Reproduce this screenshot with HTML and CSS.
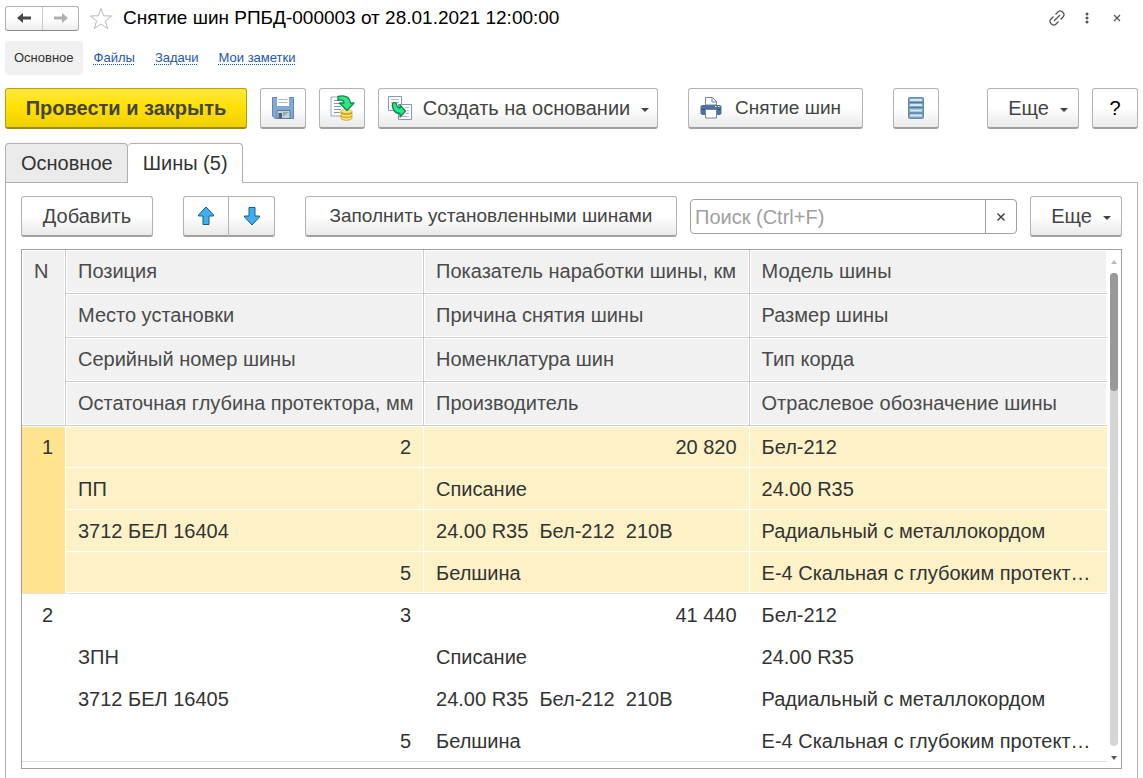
FILE: index.html
```html
<!DOCTYPE html>
<html lang="ru">
<head>
<meta charset="utf-8">
<meta name="viewport" content="width=device-width, initial-scale=1">
<title>Снятие шин РПБД-000003</title>
<link rel="stylesheet" href="styles.css">
</head>
<body>
<div class="window">
  <header class="titlebar">
    <div class="history">
      <button type="button" aria-label="Назад"><svg width="14" height="12" viewBox="0 0 14 12"><path d="M0 6l6-5v3.500h8v3H6V11z" fill="#484848"/></svg></button>
      <button type="button" aria-label="Вперед"><svg width="14" height="12" viewBox="0 0 14 12"><path d="M14 6L8 1v3.500H0v3h8V11z" fill="#b0b0b0"/></svg></button>
    </div>
    <button type="button" class="plain" aria-label="В избранное"><svg width="24" height="23" viewBox="0 0 24 23"><path d="M12 1.500l2.700 7.300 8 .2-6.300 4.900 2.300 7.600L12 17l-6.700 4.500 2.300-7.600L1.300 9l8-.2z" fill="#fff" stroke="#b3bac2"/></svg></button>
    <h1>Снятие шин РПБД-000003 от 28.01.2021 12:00:00</h1>
    <div class="window-tools">
      <button type="button" class="plain" aria-label="Получить ссылку"><svg width="16" height="16" viewBox="0 0 16 16" fill="none" stroke="#555" stroke-width="1.300"><path d="M5 11l6-6M6.500 4.500l2.700-2.700a2.800 2.800 0 0 1 4 0l1 1a2.800 2.800 0 0 1 0 4L11.500 9.500M4.500 6.500L1.800 9.200a2.800 2.800 0 0 0 0 4l1 1a2.800 2.800 0 0 0 4 0L9.500 11.500"/></svg></button>
      <button type="button" class="plain" aria-label="Меню"><svg width="4" height="12" viewBox="0 0 4 12" fill="#555"><circle cx="2" cy="2" r="1.500"/><circle cx="2" cy="6" r="1.500"/><circle cx="2" cy="10" r="1.500"/></svg></button>
      <button type="button" class="plain" aria-label="Закрыть"><svg width="8" height="8" viewBox="0 0 8 8"><path d="M1 1l6 6M7 1L1 7" stroke="#555" stroke-width="1.200"/></svg></button>
    </div>
  </header>

  <nav class="sections">
    <a class="current" href="#main">Основное</a>
    <a href="#files">Файлы</a>
    <a href="#tasks">Задачи</a>
    <a href="#notes">Мои заметки</a>
  </nav>

  <div class="toolbar">
    <button type="button" class="btn primary">Провести и закрыть</button>
    <button type="button" class="btn square" aria-label="Записать"><svg width="24" height="24" viewBox="0 0 24 24"><path d="M1.500 1.500h21v21H4l-2.500-2.500z" fill="#81a9d6" stroke="#5e88b3"/><path d="M6 1h12v9H6z" fill="#fff"/><path d="M7.500 3.500h9M7.500 6.500h9" stroke="#9ebbd5"/><path d="M6 14.500h13v8H6z" fill="#c9d3d7" stroke="#5e7b92"/><path d="M7.500 17h3.500v5H7.500z" fill="#416386"/><path d="M12 16h6l-6 5z" fill="#9caab2"/></svg></button>
    <button type="button" class="btn square" aria-label="Провести"><svg width="26" height="26" viewBox="0 0 26 26"><path d="M2 2h17v19H2z" fill="#fff" stroke="#91a6ba"/><path d="M5 5.500h6M5 8.500h6M5 11.500h7M5 14.500h7M5 17.500h6" stroke="#8197ad"/><path d="M12 17v6c0 3 11 3 11 0v-6z" fill="#e0aa25" stroke="#c29528" stroke-width=".7"/><path d="M12.500 19.500c1 2 9 2 10 0M12.500 22.500c1 2 9 2 10 0" fill="none" stroke="#fff08c" stroke-width="1.300"/><ellipse cx="17.500" cy="16.500" rx="5.500" ry="2" fill="#ffe77a" stroke="#c29528" stroke-width=".7"/><path d="M9 1.500c6-1.500 11.500 0 12.500 6.500H25L18 15.500 10.500 8h4.500c0-2.500-2.500-3.500-6-3z" fill="#2be887" stroke="#118747" stroke-width="1.300" stroke-linejoin="round"/></svg></button>
    <button type="button" class="btn create"><svg width="26" height="26" viewBox="0 0 26 26"><path d="M1.500 1.500h13v14h-13z" fill="#fff" stroke="#8299b1"/><path d="M4 4.500h8M4 7.500h8M4 10.500h3" stroke="#a8b8c8"/><path d="M11.500 9.500h13v15h-13z" fill="#fff" stroke="#8299b1"/><path d="M18 12.500h4M20 15.500h2M19 18.500h3M14 21.500h8" stroke="#a8b8c8"/><path d="M5.500 8.500c1.500-1 3-1 4 0 0 3 1 4.500 3.500 4.500v-3l5.500 6-5.500 6v-3.500c-5 0-8-4-7.500-10z" fill="#2be887" stroke="#118747" stroke-width="1.300" stroke-linejoin="round"/></svg><span>Создать на основании</span><i class="caret"></i></button>
    <button type="button" class="btn print"><svg width="22" height="22" viewBox="0 0 22 22"><path d="M5.500 8V.500h7l4 4V8z" fill="#fff" stroke="#71869d"/><path d="M12 .500V5h4.500" fill="none" stroke="#71869d"/><path d="M2 8h18l1.500 1.500v7L20 18H2L.500 16.500v-7z" fill="#4c739e"/><path d="M1 12.500h20" stroke="#315779"/><path d="M5.500 12.500h11v8.500h-11z" fill="#fff" stroke="#71869d"/><path d="M15 9.500h1.500M18 9.500h1.500" stroke="#fff"/></svg><span>Снятие шин</span></button>
    <button type="button" class="btn square list" aria-label="Список"><svg width="16" height="22" viewBox="0 0 16 22"><rect x=".5" y=".5" width="15" height="21" rx="1" fill="#7ea5c4" stroke="#5f89a9"/><path d="M2 3h12M2 8h12M2 13.500h12M2 18.500h12" stroke="#d5e7f3" stroke-width="2"/><path d="M1 5.500h14M1 10.500h14M1 16h14" stroke="#4f7da1"/></svg></button>
    <button type="button" class="btn more end">Еще<i class="caret"></i></button>
    <button type="button" class="btn square help" aria-label="Справка">?</button>
  </div>

  <div class="tabs" role="tablist">
    <button type="button" role="tab" aria-selected="false">Основное</button>
    <button type="button" role="tab" aria-selected="true">Шины (5)</button>
  </div>

  <main class="panel">
    <div class="commands">
      <button type="button" class="btn add">Добавить</button>
      <div class="pair">
        <button type="button" class="btn" aria-label="Переместить вверх"><svg width="18" height="20" viewBox="0 0 18 20"><path d="M9 1l7.500 8v1H12v8.500H6V10H1.500V9z" fill="#43aeee" stroke="#10608f" stroke-linejoin="round"/></svg></button>
        <button type="button" class="btn" aria-label="Переместить вниз"><svg width="18" height="20" viewBox="0 0 18 20"><path d="M9 19l7.500-8v-1H12V1.500H6V10H1.500v1z" fill="#43aeee" stroke="#10608f" stroke-linejoin="round"/></svg></button>
      </div>
      <button type="button" class="btn fill">Заполнить установленными шинами</button>
      <div class="search">
        <input type="text" aria-label="Поиск" placeholder="Поиск (Ctrl+F)">
        <button type="button" aria-label="Очистить"><svg width="10" height="10" viewBox="0 0 10 10"><path d="M1.500 1.500l7 7M8.500 1.500l-7 7" stroke="#444" stroke-width="1.500"/></svg></button>
      </div>
      <button type="button" class="btn more">Еще<i class="caret"></i></button>
    </div>

    <div class="grid">
      <table>
        <colgroup><col class="c-num"><col class="c-pos"><col class="c-run"><col></colgroup>
        <thead>
          <tr><th rowspan="4" class="num">N</th><th>Позиция</th><th>Показатель наработки шины, км</th><th>Модель шины</th></tr>
          <tr><th>Место установки</th><th>Причина снятия шины</th><th>Размер шины</th></tr>
          <tr><th>Серийный номер шины</th><th>Номенклатура шин</th><th>Тип корда</th></tr>
          <tr><th>Остаточная глубина протектора, мм</th><th>Производитель</th><th>Отраслевое обозначение шины</th></tr>
        </thead>
        <tbody class="selected">
          <tr><td rowspan="4" class="num">1</td><td class="right">2</td><td class="right">20 820</td><td>Бел-212</td></tr>
          <tr><td>ПП</td><td>Списание</td><td>24.00 R35</td></tr>
          <tr><td>3712 БЕЛ 16404</td><td class="goods">24.00 R35  Бел-212  210В</td><td>Радиальный с металлокордом</td></tr>
          <tr><td class="right">5</td><td>Белшина</td><td>Е-4 Скальная с глубоким протект…</td></tr>
        </tbody>
        <tbody>
          <tr><td rowspan="4" class="num">2</td><td class="right">3</td><td class="right">41 440</td><td>Бел-212</td></tr>
          <tr><td>ЗПН</td><td>Списание</td><td>24.00 R35</td></tr>
          <tr><td>3712 БЕЛ 16405</td><td class="goods">24.00 R35  Бел-212  210В</td><td>Радиальный с металлокордом</td></tr>
          <tr><td class="right">5</td><td>Белшина</td><td>Е-4 Скальная с глубоким протект…</td></tr>
        </tbody>
      </table>
      <div class="scroll">
        <i class="up"></i>
        <div class="track"><div class="thumb"></div></div>
        <i class="down"></i>
      </div>
    </div>
  </main>
</div>
</body>
</html>
```
FILE: styles.css
```css
* { box-sizing: border-box; }

body {
  margin: 0;
  background: #fff;
  color: #333;
  font-family: "Liberation Sans", Arial, sans-serif;
  font-size: 20px;
  line-height: 24px;
}

button, input { font: inherit; color: inherit; margin: 0; padding: 0; }
svg { display: block; flex: none; }

.window {
  display: flex;
  flex-direction: column;
  min-height: 100vh;
  padding: 0 5px;
}

.titlebar { display: flex; align-items: center; height: 36px; margin-bottom: 5px; }

.history {
  display: flex;
  border: 1px solid #b0b0b0;
  border-bottom-color: #8c8c8c;
  border-radius: 3px;
  background: linear-gradient(#fff 50%, #ececec);
}
.history button {
  display: grid;
  place-items: center;
  width: 36px;
  height: 23px;
  border: 0;
  background: none;
}
.history button + button { border-left: 1px solid #ccc; }

.plain { border: 0; background: none; }
.titlebar > .plain { margin-left: 10px; }

h1 {
  margin: 0 0 0 10px;
  color: #000;
  font-size: 19px;
  font-weight: 400;
}

.window-tools { display: flex; align-items: center; gap: 14px; margin-left: auto; padding-right: 13px; }
.window-tools .plain { display: grid; place-items: center; width: 16px; height: 16px; }

.sections {
  display: flex;
  align-items: center;
  gap: 20px;
  margin-bottom: 13px;
  font-size: 13px;
  line-height: 16px;
}
.sections a { color: #1c55ae; text-decoration: underline dotted 1px; text-underline-offset: 2px; }
.sections .current {
  margin-right: -9px;
  padding: 9px 9px;
  border-radius: 4px;
  background: #f0f0f0;
  color: #333;
  text-decoration: none;
}

.toolbar { display: flex; gap: 13px; margin-bottom: 14px; }

.btn {
  display: flex;
  align-items: center;
  justify-content: center;
  height: 41px;
  border: 1px solid #b3b3b3;
  border-bottom: 2px solid #a0a0a0;
  border-radius: 3px;
  background: linear-gradient(#fff 50%, #e9e9e9);
  color: #444;
  white-space: nowrap;
}
.primary {
  width: 242px;
  border-color: #b59f0c;
  border-bottom-color: #9c8a14;
  background: linear-gradient(#ffe93f, #ffe000 50%, #f0d000);
  font-weight: 700;
}
.square { width: 46px; }
.create { width: 280px; }
.create span { margin-left: 10px; }
.print { justify-content: flex-start; width: 175px; margin-left: 17px; padding-left: 11px; font-size: 19px; }
.print span { margin-left: 13px; }
.list { margin-left: 17px; }
.more { width: 92px; padding-left: 10px; }
.end { margin-left: auto; }
.help { color: #000; }

.caret {
  margin: 4px 0 0 11px;
  border: 4px solid transparent;
  border-top-color: #444;
  border-bottom: 0;
}

.tabs { display: flex; }
.tabs button {
  height: 39px;
  padding: 0 14px 0 15px;
  border: 1px solid #b0b0b0;
  border-bottom: 0;
  border-radius: 4px 4px 0 0;
  background: #ebebeb;
}
.tabs button + button { border-left: 0; }
.tabs [aria-selected="true"] {
  position: relative;
  height: 40px;
  margin-bottom: -1px;
  padding-bottom: 1px;
  background: #fff;
}

.panel {
  display: flex;
  flex: 1;
  flex-direction: column;
  padding: 13px 15px 9px;
  border: 1px solid #b0b0b0;
  border-bottom: 0;
}

.commands { display: flex; align-items: center; margin-bottom: 12px; }
.add { width: 132px; }
.pair { display: flex; margin: 0 30px; }
.pair .btn { width: 46px; border-radius: 3px 0 0 3px; }
.pair .btn + .btn { border-left: 0; border-radius: 0 3px 3px 0; }
.fill { width: 372px; font-size: 19px; }

.search {
  display: flex;
  flex: 1;
  height: 35px;
  margin: 0 13px;
  border: 1px solid #a0a0a0;
  border-radius: 4px;
}
.search input { flex: 1; min-width: 0; padding: 0 4px; border: 0; outline: 0; background: none; }
.search input::placeholder { color: #a0a0a0; opacity: 1; }
.search button {
  display: grid;
  place-items: center;
  width: 31px;
  border: 0;
  border-left: 1px solid #a0a0a0;
  background: none;
}

.grid { display: flex; flex: 1; border: 1px solid #a0a0a0; }

table { flex: 1; align-self: flex-start; width: 0; table-layout: fixed; border-collapse: separate; border-spacing: 0; }
.c-num { width: 44px; }
.c-pos { width: 33%; }
.c-run { width: 30%; }

th, td {
  height: 42px;
  padding: 0 12px;
  overflow: hidden;
  text-align: left;
  text-overflow: ellipsis;
  white-space: nowrap;
}
th {
  height: 44px;
  padding: 0 4px 2px 12px;
  border: solid #ccc;
  border-width: 0 1px 1px 0;
  background: #f1f1f1;
  box-shadow: inset 0 0 0 1px #fff;
  color: #4a4a4a;
  font-weight: 400;
}
th:last-child { border-right: 0; }
td { border: solid #fff; border-width: 0 1px 1px 0; }
td:last-child { border-right: 0; }
tr:last-child td, td.num { border-bottom-color: #e0e0e0; }
.num { padding-top: 9px; vertical-align: top; }
td.num { text-align: right; }
.right { text-align: right; }
.goods { white-space: pre; }

.selected td { background: #fdf2c7; }
.selected tr:first-child td { box-shadow: inset 0 1px #fff; }
.selected tr:last-child td { box-shadow: inset 0 -1px #fff; }
.selected .num { background: #fee48f; }

.scroll {
  display: flex;
  flex-direction: column;
  align-items: center;
  width: 14px;
  padding: 10px 0 8px;
}
.track { flex: 1; width: 8px; margin: 9px 0 10px; border-radius: 4px; background: #d5d5d5; }
.thumb { height: 25%; border-radius: 4px; background: #999; }
.up, .down { border: 3px solid transparent; }
.up { border-top: 0; border-bottom: 4px solid #bbb; }
.down { border-bottom: 0; border-top: 4px solid #555; }
```
